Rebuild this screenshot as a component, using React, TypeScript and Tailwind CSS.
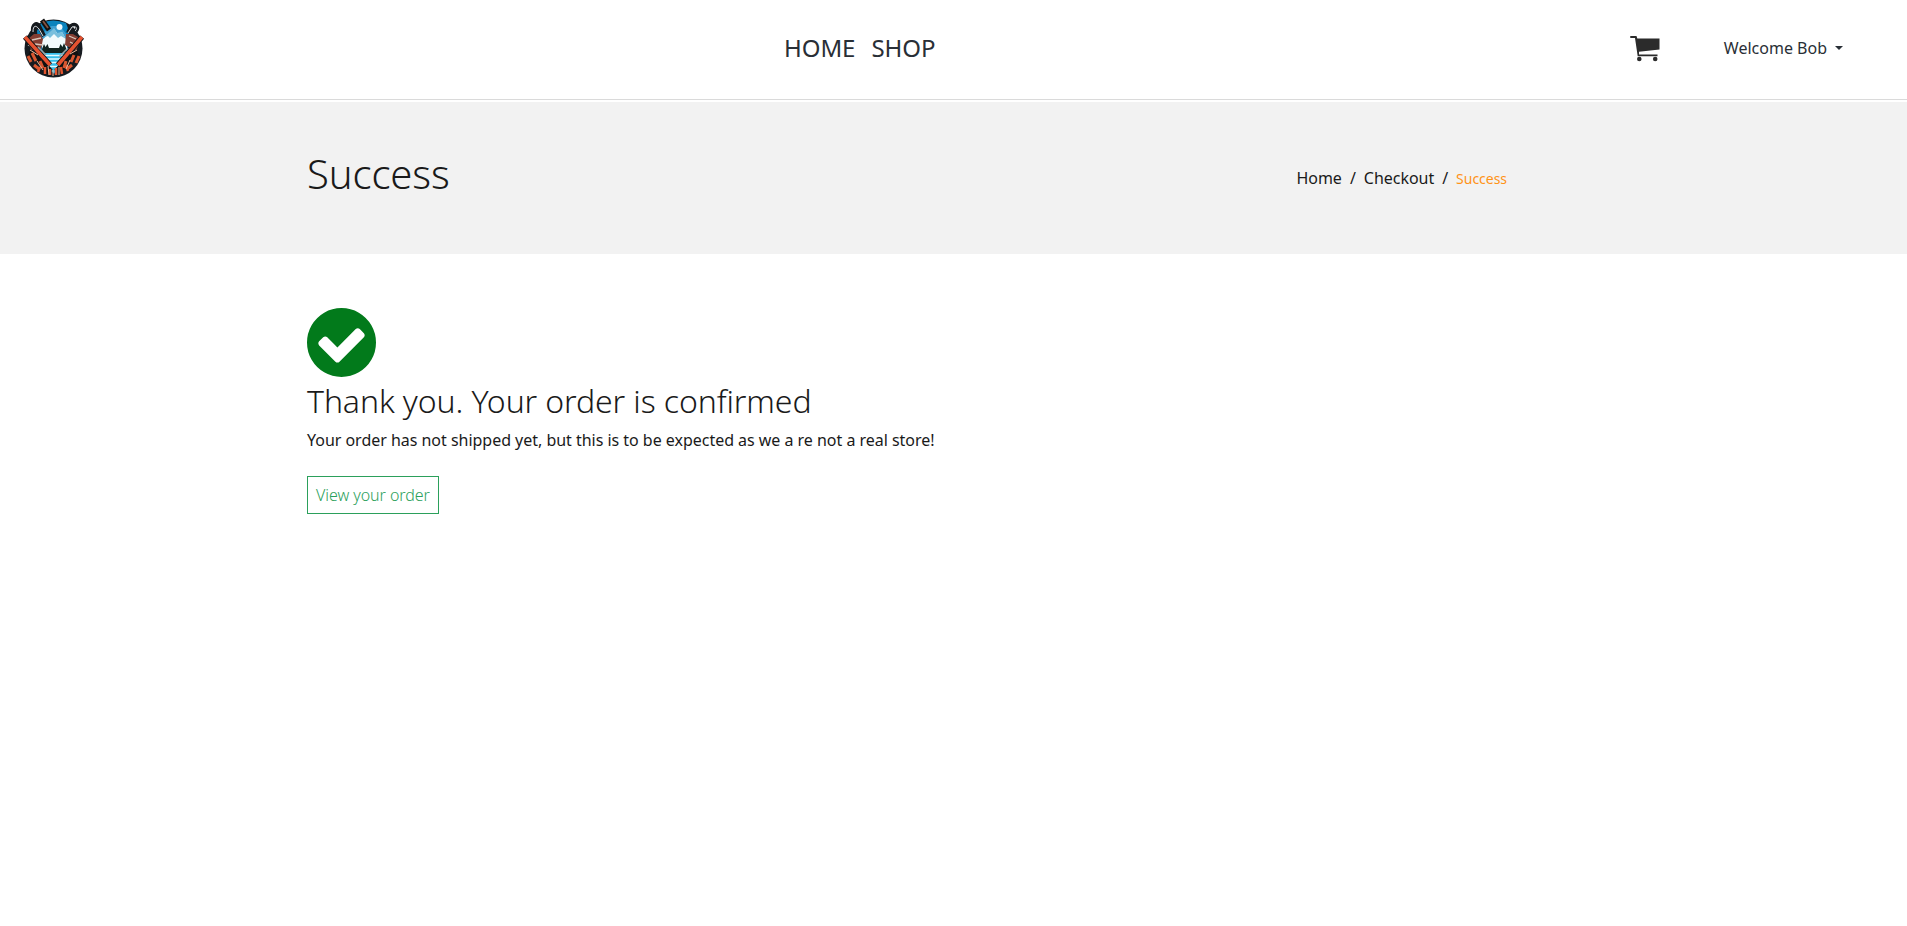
import React from "react";

const Logo = () => (
  <svg className="h-[63px] w-[66px]" viewBox="0 0 66 63" aria-label="Store logo">
    <circle cx="33.5" cy="30.5" r="29" fill="#171b20" />
    <path d="M21 5q12-5 25 0l3 8-2 29-13 14-14-15-3-28z" fill="#0b83bd" />
    <path d="M22 16l9-8h9l7 9v10H22z" fill="#3f9fd0" />
    <circle cx="39.500" cy="9" r="3" fill="#eefaff" />
    <path d="M22 31v-9l9-8 3-3 4 5 4-2 5 9v8z" fill="#f1fafc" />
    <path d="M24 19l7-6 3-3 3 5 5-1 4 7-5-3-3 2-4-4-4 4-2-2z" fill="#78bfdd" />
    <path d="M22 31l2-5 1.500 3 2-3 1.500 4h10l1.500-4 2 3 1.500-4 2 5v4l-4 2H24z" fill="#10231f" />
    <path d="M22 35h23v9l-11 11-11-10z" fill="#35bde9" />
    <path d="M24 37.500h19M24 41h19M26 44.500h15M29 48.500h9" stroke="#e3fbff" strokeWidth="1.500" />
    <path d="M13 14c-1-8 4-10 6-6l5 10M48 15l3-7c5-3 8 1 5 5" fill="none" stroke="#15191d" strokeWidth="4" />
    <path d="M13 14c0-7 3-7 6-3l4 7M48 15l4-6c4-2 6 2 3 4" fill="none" stroke="#d8dde0" strokeWidth="1" />
    <path d="M22 2l7 10" stroke="#111" strokeWidth="5" />
    <path d="M23 3l5 7" stroke="#865340" strokeWidth="1.800" />
    <path d="M8 21l6-5h6l3 5-2 10-10 1zM46 16h7l8 5-5 12-11-6z" fill="#833d32" />
    <path d="M8 27l5 2M12 22l9-2M15 26l8 1M49 18l7 3M50 24l6 3" stroke="#d9c6ba" strokeWidth="1.300" />
    <path d="M9 35l8 4 13 15M58 35l-8 4-13 15" fill="none" stroke="#111" strokeWidth="7" />
    <path d="M5 19l25 28M62 19L38 47" fill="none" stroke="#101316" strokeWidth="5.500" />
    <path d="M5 19l25 28M62 19L38 47" fill="none" stroke="#e65230" strokeWidth="3.500" />
    <path d="M18 29l8 8M48 30l-9 9" stroke="#9aa5a7" strokeWidth="1.500" />
    <path d="M8 38l3 6M12 35l4 8M14 47l5 4M20 43l3 7M59 38l-3 7M54 37l-3 7M52 47l-5 4M46 43l-2 7" stroke="#d95831" strokeWidth="3" />
    <path d="M20 49l-2 5M25 49v7M30 51v6M36 50v7M41 49l1 7M46 47l2 6" stroke="#e2552f" strokeWidth="2.500" />
    <path d="M17 43l6 9M28 48l1 9M33 52v6M39 49v8M50 42l-4 9M10 32l8 5M57 32l-7 4" stroke="#efb99a" strokeWidth="1" />
  </svg>
);

const CartIcon = () => (
  <svg className="h-[26px] w-[30px]" viewBox="0 0 30 26" fill="#2b2b2b">
    <path d="M1 0h5.500l.8 2.400H29.500V13.500L9 15.700v2.700H27.500v1.800H7.700L5 2H1a1 1 0 0 1 0-2z" />
    <circle cx="9.300" cy="23" r="2.300" />
    <circle cx="25.200" cy="23" r="2.300" />
  </svg>
);

const CheckIcon = () => (
  <svg className="h-[69px] w-[69px]" viewBox="128 128 1536 1536" fill="#027a1b">
    <path d="M1412 734q0-28-18-46l-91-90q-19-19-45-19t-45 19l-408 407-226-226q-19-19-45-19t-45 19l-91 90q-18 18-18 46 0 27 18 45l362 362q19 19 45 19 27 0 46-19l543-543q18-18 18-45zm252 162q0 209-103 385.500t-279.500 279.500-385.500 103-385.500-103-279.500-279.500-103-385.500 103-385.500 279.500-279.500 385.500-103 385.500 103 279.500 279.500 103 385.500z" />
  </svg>
);

export default function App() {
  return (
    <div className="min-h-screen bg-white font-['Noto_Sans',sans-serif] text-base leading-6 text-[#1a1a1a]">
      <header className="flex h-[100px] items-start border-b border-[#dadada] text-[#292f36]">
        <div className="w-[784px] pt-[18px] pl-5">
          <Logo />
        </div>
        <nav className="flex gap-4 pt-[30px] text-2xl leading-9 tracking-[-0.06px]">
          <a href="#">HOME</a>
          <a href="#">SHOP</a>
        </nav>
        <div className="ml-auto flex pr-[64px]">
          <a href="#" className="mt-9 mr-16" aria-label="Cart">
            <CartIcon />
          </a>
          <button className="mt-9 flex h-6 items-center gap-2">
            Welcome Bob
            <span className="border-x-4 border-t-4 border-x-transparent border-t-[#292f36]" />
          </button>
        </div>
      </header>
      <section className="mt-0.5 flex h-[152px] items-start justify-between bg-[#f2f2f2] pr-[400px] pl-[307px]">
        <h1 className="pt-12 text-[40px] leading-[48px] font-light tracking-[-0.1px]">Success</h1>
        <div className="flex gap-2 pt-16 tracking-[-0.03px]">
          <a href="#">Home</a>
          <span>/</span>
          <a href="#">Checkout</a>
          <span>/</span>
          <span className="text-sm leading-[26px] text-[#ff9317]">Success</span>
        </div>
      </section>
      <main className="pt-[54px] pr-[400px] pl-[307px]">
        <CheckIcon />
        <h2 className="mt-[5px] text-[32px] leading-[38px] font-light tracking-[-0.1px]">Thank you. Your order is confirmed</h2>
        <p className="mt-2 tracking-[-0.025px]">Your order has not shipped yet, but this is to be expected as we a re not a real store!</p>
        <a href="#" className="mt-6 inline-block border border-[#2ba05b] px-2 py-1.5 font-light tracking-[-0.05px] text-[#2ba05b]">View your order</a>
      </main>
    </div>
  );
}
